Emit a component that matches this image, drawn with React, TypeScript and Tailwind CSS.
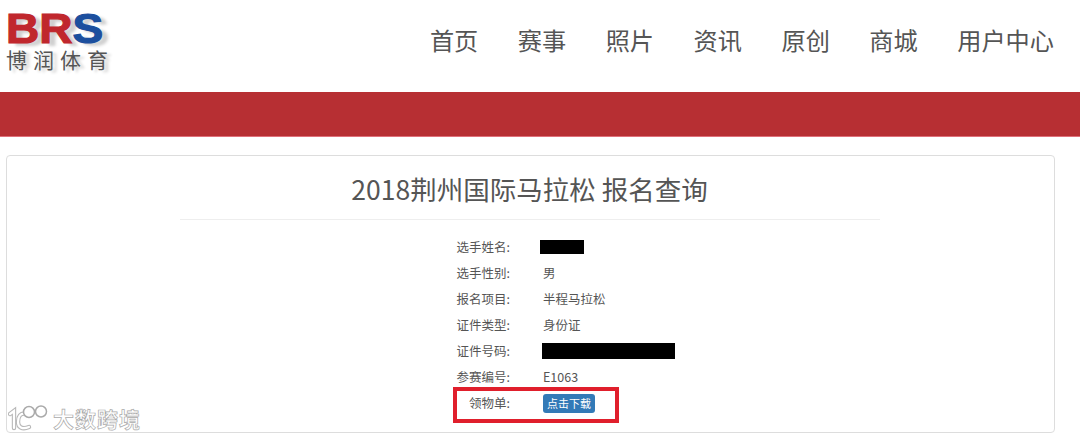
const font = { fontFamily: '"Noto Sans CJK SC", "Liberation Sans", sans-serif' }

const navItems = ['首页', '赛事', '照片', '资讯', '原创', '商城', '用户中心']

const rows = [
  { label: '选手姓名:', value: '', mask: 'w-[44px] h-[14px] -ml-[3px]' },
  { label: '选手性别:', value: '男' },
  { label: '报名项目:', value: '半程马拉松' },
  { label: '证件类型:', value: '身份证' },
  { label: '证件号码:', value: '', mask: 'w-[133px] h-[16px] -ml-[1px]' },
  { label: '参赛编号:', value: 'E1063' },
]

function Logo() {
  return (
    <div className="flex flex-col items-start select-none -mt-[10px]">
      <div className="h-[34px] flex items-center font-black text-[43px] leading-[34px] origin-left scale-x-[1.07] [font-family:'Liberation_Sans',sans-serif] [-webkit-text-stroke:1.2px_currentColor] [text-shadow:6px_3px_3px_#cfcfcf]">
        <span className="text-[#c0272d]">BR</span>
        <span className="text-[#1c4f9e]">S</span>
      </div>
      <div className="mt-[2px] text-[21px] leading-[24px] tracking-[6px] text-[#555] [text-shadow:4px_2px_3px_#d0d0d0]">
        博润体育
      </div>
    </div>
  )
}

function Watermark() {
  return (
    <div className="absolute left-[8px] top-[404px] flex items-center gap-[3px] pointer-events-none">
      <svg width="42" height="28" viewBox="0 0 42 28" fill="none">
        <g stroke="#b8b8b8" strokeWidth="4.4" strokeLinecap="round">
          <path d="M2 10 L6 7 V24" />
          <path d="M19 10 C12 8 10 13 10 18 C10 23 14 26 21 23" />
        </g>
        <g stroke="#fff" strokeWidth="2.2" strokeLinecap="round">
          <path d="M2 10 L6 7 V24" />
          <path d="M19 10 C12 8 10 13 10 18 C10 23 14 26 21 23" />
        </g>
        <circle cx="21" cy="8" r="5.5" stroke="#aaa" strokeWidth="1.5" fill="#fff" />
        <circle cx="33" cy="7.5" r="5.5" stroke="#aaa" strokeWidth="1.5" fill="#fff" />
      </svg>
      <span className="text-[21px] leading-[28px] tracking-[1px] font-bold text-white [-webkit-text-stroke:0.7px_#aaa]">
        大数跨境
      </span>
    </div>
  )
}

export default function App() {
  return (
    <div className="relative w-[1080px] h-[438px] bg-white overflow-hidden text-[#555]" style={font}>
      {/* Header */}
      <header className="h-[92px] flex items-center justify-between pl-[6px] pr-[26px]">
        <Logo />
        <nav className="flex items-center gap-[39.5px] text-[24.2px] leading-[32px] text-[#555] -mt-[12px]">
          {navItems.map((item) => (
            <a key={item}>{item}</a>
          ))}
        </nav>
      </header>

      <div className="h-[45px] bg-[#b72f33] border-b border-[#e0707a]" />

      {/* Card */}
      <main className="mt-[18px] mx-[6px] w-[1049px] h-[278px] border border-[#ddd] rounded-[4px] flex flex-col items-center">
        <h1 className="mt-[14px] h-[38px] text-[26.5px] leading-[38px] text-[#555] -translate-x-[1px]">2018荆州国际马拉松 报名查询</h1>
        <div className="mt-[11px] w-[700px] -translate-x-[1px] border-t border-[#eee]" />

        <div className="mt-[14px] self-start flex flex-col text-[12.5px] text-[#555]">
          {rows.map((row) => (
            <div key={row.label} className="h-[26px] flex items-center">
              <div className="w-[503px] text-right">{row.label}</div>
              <div className="ml-[33px] flex items-center">
                {row.mask ? <div className={`bg-black ${row.mask}`} /> : row.value}
              </div>
            </div>
          ))}
          <div className="h-[26px] flex items-center pt-[1px]">
            <div className="w-[503px] text-right">领物单:</div>
            <button className="ml-[33px] h-[19px] w-[52px] rounded-[3px] bg-[#337ab7] text-white text-[11px] leading-[19px] text-center">
              点击下载
            </button>
          </div>
        </div>
      </main>

      {/* Annotation box */}
      <div className="absolute left-[453px] top-[387px] w-[166px] h-[36px] border-[4px] border-[#e01f2c] pointer-events-none" />
      <Watermark />
    </div>
  )
}
